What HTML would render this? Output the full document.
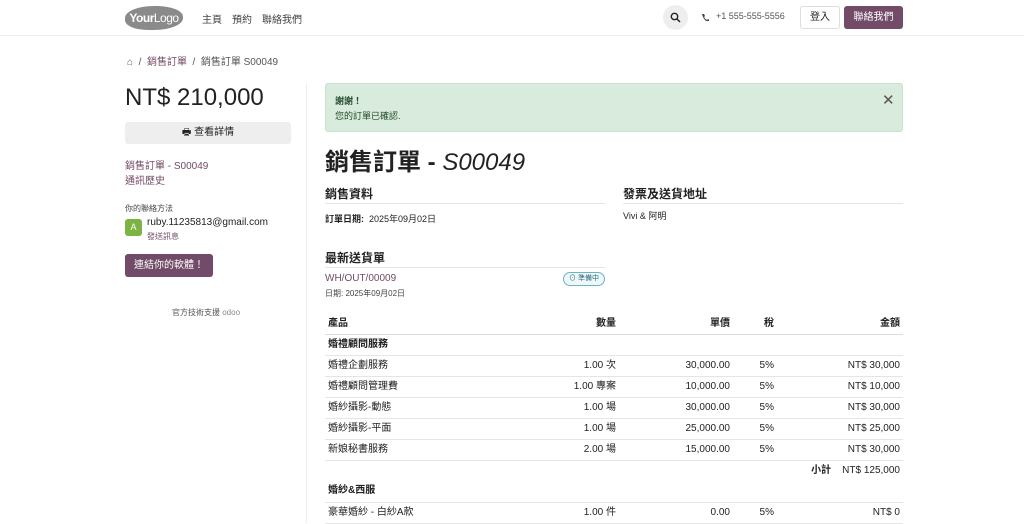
<!DOCTYPE html>
<html><head><meta charset="utf-8"><style>
*{box-sizing:border-box;margin:0;padding:0}
body{width:1024px;height:523px;overflow:hidden;background:#fff;font-family:"Liberation Sans","Noto Sans CJK TC",sans-serif;color:#222;font-size:10px;position:relative}
.a{position:absolute;white-space:nowrap}
.pur{color:#714b67}
table{border-collapse:collapse;width:578px;table-layout:fixed}
td,th{height:21px;line-height:12px;vertical-align:middle;border-bottom:1px solid #e5e5e5;padding:0 3px;font-size:10px;text-align:right;white-space:nowrap}
th{font-weight:bold;height:20px;border-bottom:1px solid #ddd}
td:first-child,th:first-child{text-align:left}
</style></head><body>
<div class="a" style="left:0;top:0;width:1024px;height:36px;border-bottom:1px solid #eee"></div>
<div class="a" style="left:125px;top:6px;width:58px;height:24px;background:#8a8a8a;border-radius:50% 45% 50% 40%;color:#fff;font-size:12px;line-height:24px;text-align:center;letter-spacing:-0.5px"><b>Your</b>Logo</div>
<div class="a" style="left:202px;top:11px;font-size:10px;color:#444"><span>主頁</span><span style="margin-left:10px">預約</span><span style="margin-left:10px">聯絡我們</span></div>
<div class="a" style="left:663px;top:5px;width:25px;height:25px;border-radius:50%;background:#eee"></div>
<svg class="a" style="left:670px;top:12px" width="11" height="11" viewBox="0 0 11 11"><circle cx="4.5" cy="4.5" r="3.2" stroke="#222" stroke-width="1.4" fill="none"/><path d="M7 7l3 3" stroke="#222" stroke-width="1.5"/></svg>
<svg class="a" style="left:701px;top:13px" width="8" height="8" viewBox="0 0 8 8"><path d="M1 1l2 0 1 2-1 1q1 2 3 3l1-1 2 1v2q-6 0-8-8z" fill="#444"/></svg>
<div class="a" style="left:716px;top:11px;font-size:9px;color:#555">+1 555-555-5556</div>
<div class="a" style="left:800px;top:6px;width:40px;height:23px;border:1px solid #ddd;border-radius:3px;text-align:center;line-height:21px;font-size:10px">登入</div>
<div class="a" style="left:844px;top:6px;width:59px;height:23px;background:#714b67;border-radius:3px;color:#fff;text-align:center;line-height:23px;font-size:10px">聯絡我們</div>
<div class="a" style="left:127px;top:53px;font-size:10px;color:#555"><span class="pur">⌂</span> &nbsp;/&nbsp; <span class="pur">銷售訂單</span> &nbsp;/&nbsp; 銷售訂單 S00049</div>
<div class="a" style="left:125px;top:84px;font-size:24px;color:#222">NT$ 210,000</div>
<div class="a" style="left:125px;top:122px;width:166px;height:22px;background:#eee;border-radius:3px;text-align:center;line-height:22px;font-size:10px">🖶 查看詳情</div>
<div class="a pur" style="left:125px;top:159px;font-size:10px;line-height:15px">銷售訂單 - S00049<br>通訊歷史</div>
<div class="a" style="left:125px;top:203px;font-size:8px;color:#444">你的聯絡方法</div>
<div class="a" style="left:125px;top:219px;width:17px;height:17px;background:#7cb342;border-radius:3px;color:#fff;text-align:center;line-height:17px;font-size:9px">A</div>
<div class="a" style="left:147px;top:217px;font-size:10px">ruby.11235813@gmail.com</div>
<div class="a pur" style="left:147px;top:231px;font-size:8px">發送訊息</div>
<div class="a" style="left:125px;top:254px;width:88px;height:23px;background:#714b67;border-radius:3px;color:#fff;text-align:center;line-height:23px;font-size:10px">連結你的軟體！</div>
<div class="a" style="left:172px;top:307px;font-size:8px;color:#555">官方技術支援 <span style="color:#888">odoo</span></div>
<div class="a" style="left:306px;top:83px;width:1px;height:440px;background:#eee"></div>
<div class="a" style="left:325px;top:83px;width:578px;height:49px;background:#d8ebdc;border:1px solid #c6e2cc;border-radius:3px"></div>
<div class="a" style="left:335px;top:94px;font-size:9px;color:#224a2c;line-height:15px"><b>謝謝！</b><br>您的訂單已確認.</div>
<div class="a" style="left:882px;top:91px;font-size:15px;color:#555">✕</div>
<div class="a" style="left:325px;top:142px;font-size:24px"><b>銷售訂單 - </b><i>S00049</i></div>
<div class="a" style="left:325px;top:185px;font-size:12px;font-weight:bold">銷售資料</div>
<div class="a" style="left:325px;top:203px;width:280px;height:1px;background:#e5e5e5"></div>
<div class="a" style="left:325px;top:212px;font-size:9px"><b>訂單日期:</b>&nbsp; 2025年09月02日</div>
<div class="a" style="left:623px;top:185px;font-size:12px;font-weight:bold">發票及送貨地址</div>
<div class="a" style="left:623px;top:203px;width:280px;height:1px;background:#e5e5e5"></div>
<div class="a" style="left:623px;top:209px;font-size:9px">Vivi &amp; 阿明</div>
<div class="a" style="left:325px;top:249px;font-size:12px;font-weight:bold">最新送貨單</div>
<div class="a" style="left:325px;top:267px;width:280px;height:1px;background:#e5e5e5"></div>
<div class="a pur" style="left:325px;top:273px;font-size:10px">WH/OUT/00009</div>
<div class="a" style="left:325px;top:288px;font-size:8px;color:#444">日期: 2025年09月02日</div>
<div class="a" style="left:563px;top:272px;width:42px;height:14px;border:1px solid #6bb5c2;background:#eef7f9;border-radius:7px;font-size:7px;text-align:center;line-height:12px;color:#2c6b78">⊙ 準備中</div>
<table class="a" style="left:325px;top:314px">
<colgroup><col style="width:190px"><col style="width:104px"><col style="width:114px"><col style="width:44px"><col></colgroup>
<tr><th>產品</th><th>數量</th><th>單價</th><th>稅</th><th>金額</th></tr>
<tr><td colspan="5" style="font-weight:bold">婚禮顧問服務</td></tr>
<tr><td>婚禮企劃服務</td><td>1.00 次</td><td>30,000.00</td><td>5%</td><td>NT$ 30,000</td></tr>
<tr><td>婚禮顧問管理費</td><td>1.00 專案</td><td>10,000.00</td><td>5%</td><td>NT$ 10,000</td></tr>
<tr><td>婚紗攝影-動態</td><td>1.00 場</td><td>30,000.00</td><td>5%</td><td>NT$ 30,000</td></tr>
<tr><td>婚紗攝影-平面</td><td>1.00 場</td><td>25,000.00</td><td>5%</td><td>NT$ 25,000</td></tr>
<tr><td>新娘秘書服務</td><td>2.00 場</td><td>15,000.00</td><td>5%</td><td>NT$ 30,000</td></tr>
<tr><td colspan="4" style="border:none"></td><td style="border:none"><b>小計</b>&nbsp;&nbsp;&nbsp; NT$ 125,000</td></tr>
<tr><td colspan="5" style="font-weight:bold">婚紗&amp;西服</td></tr>
<tr><td>豪華婚紗 - 白紗A款</td><td>1.00 件</td><td>0.00</td><td>5%</td><td>NT$ 0</td></tr>
</table>
</body></html>
